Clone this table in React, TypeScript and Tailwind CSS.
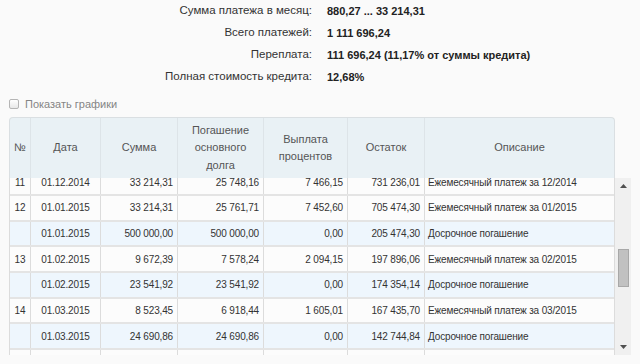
import React from "react";

type Row = {
  n: string;
  d: string;
  s: string;
  p: string;
  v: string;
  o: string;
  desc: string;
  early?: boolean;
};

const rows: Row[] = [
  { n: "11", d: "01.12.2014", s: "33 214,31", p: "25 748,16", v: "7 466,15", o: "731 236,01", desc: "Ежемесячный платеж за 12/2014" },
  { n: "12", d: "01.01.2015", s: "33 214,31", p: "25 761,71", v: "7 452,60", o: "705 474,30", desc: "Ежемесячный платеж за 01/2015" },
  { n: "", d: "01.01.2015", s: "500 000,00", p: "500 000,00", v: "0,00", o: "205 474,30", desc: "Досрочное погашение", early: true },
  { n: "13", d: "01.02.2015", s: "9 672,39", p: "7 578,24", v: "2 094,15", o: "197 896,06", desc: "Ежемесячный платеж за 02/2015" },
  { n: "", d: "01.02.2015", s: "23 541,92", p: "23 541,92", v: "0,00", o: "174 354,14", desc: "Досрочное погашение", early: true },
  { n: "14", d: "01.03.2015", s: "8 523,45", p: "6 918,44", v: "1 605,01", o: "167 435,70", desc: "Ежемесячный платеж за 03/2015" },
  { n: "", d: "01.03.2015", s: "24 690,86", p: "24 690,86", v: "0,00", o: "142 744,84", desc: "Досрочное погашение", early: true },
  { n: "", d: "", s: "", p: "", v: "", o: "", desc: "" },
];

const summary: [string, string][] = [
  ["Сумма платежа в месяц:", "880,27 ... 33 214,31"],
  ["Всего платежей:", "1 111 696,24"],
  ["Переплата:", "111 696,24 (11,17% от суммы кредита)"],
  ["Полная стоимость кредита:", "12,68%"],
];

const grid = "grid grid-cols-[20px_70px_77px_86px_84px_77px_190px]";

export default function App() {
  return (
    <div
      className="w-[640px] h-[364px] overflow-hidden bg-[#fafafa] text-[#333]"
      style={{ fontFamily: '"Liberation Sans", Arial, sans-serif' }}
    >
      {/* Summary */}
      <div className="grid grid-cols-[312px_1fr] gap-x-[15px]">
        {summary.map(([l, v]) => (
          <React.Fragment key={l}>
            <div className="h-[22px] flex items-center justify-end text-[11.5px] text-[#333]">{l}</div>
            <div className="h-[22px] flex items-center text-[11px] font-bold text-[#222]">{v}</div>
          </React.Fragment>
        ))}
      </div>

      {/* Checkbox */}
      <div className="mt-[6px] h-[20px] pl-[9px] flex items-center gap-[6px]">
        <span className="w-[10px] h-[10px] rounded-[2px] border border-[#b5b5b5] bg-gradient-to-b from-white to-[#e8e8e8]" />
        <span className="text-[11px] text-[#858585]">Показать графики</span>
      </div>

      {/* Table */}
      <div className="mt-[3px] ml-[9px] w-[622px]">
        {/* Header */}
        <div
          className={`${grid} w-[606px] h-[61px] bg-[#e9f1f5] border-t border-l border-r border-[#dadfe2] rounded-t-[4px] text-[11px] text-[#555] leading-[17.5px] text-center`}
        >
          <div className="flex items-center justify-center">№</div>
          <div className="flex items-center justify-center border-l border-[#dde4e8]">Дата</div>
          <div className="flex items-center justify-center border-l border-[#dde4e8]">Сумма</div>
          <div className="flex items-center justify-center border-l border-[#dde4e8]">
            Погашение
            <br />
            основного
            <br />
            долга
          </div>
          <div className="flex items-center justify-center border-l border-[#dde4e8]">
            Выплата
            <br />
            процентов
          </div>
          <div className="flex items-center justify-center border-l border-[#dde4e8]">Остаток</div>
          <div className="flex items-center justify-center border-l border-[#dde4e8]">Описание</div>
        </div>

        {/* Body + scrollbar */}
        <div className="flex h-[177px]">
          <div className="w-[606px] h-[177px] overflow-hidden border-l border-r border-[#dcdcdc]">
            <div className="mt-[-7.5px]">
              {rows.map((r, i) => (
                <div
                  key={i}
                  className={`${grid} h-[25.67px] border-b-2 border-[#e4e4e4] text-[10px] tracking-[-0.15px] text-[#333] ${
                    r.early ? "bg-[#eef6fd]" : "bg-[#fcfcfc]"
                  }`}
                >
                  <div className="flex items-center justify-center">{r.n}</div>
                  <div className="flex items-center justify-center border-l border-[#dcdcdc]">{r.d}</div>
                  <div className="flex items-center justify-end pr-[4px] border-l border-[#dcdcdc]">{r.s}</div>
                  <div className="flex items-center justify-end pr-[4px] border-l border-[#dcdcdc]">{r.p}</div>
                  <div className="flex items-center justify-end pr-[4px] border-l border-[#dcdcdc]">{r.v}</div>
                  <div className="flex items-center justify-end pr-[4px] border-l border-[#dcdcdc]">{r.o}</div>
                  <div className="flex items-center pl-[3px] border-l border-[#dcdcdc] whitespace-nowrap">{r.desc}</div>
                </div>
              ))}
            </div>
          </div>
          {/* Scrollbar */}
          <div className="w-[16px] h-[177px] bg-[#f0f0f0] flex flex-col items-center">
            <div className="h-[16px] w-full flex items-center justify-center">
              <svg width="7" height="4" viewBox="0 0 7 4">
                <polygon points="3.5,0 7,4 0,4" fill="#505050" />
              </svg>
            </div>
            <div className="mt-[55px] w-[11px] h-[38px] bg-[#c1c1c1] border border-[#a8a8a8]" />
            <div className="flex-1" />
            <div className="h-[16px] w-full flex items-center justify-center">
              <svg width="7" height="4" viewBox="0 0 7 4">
                <polygon points="0,0 7,0 3.5,4" fill="#505050" />
              </svg>
            </div>
          </div>
        </div>
      </div>
    </div>
  );
}
